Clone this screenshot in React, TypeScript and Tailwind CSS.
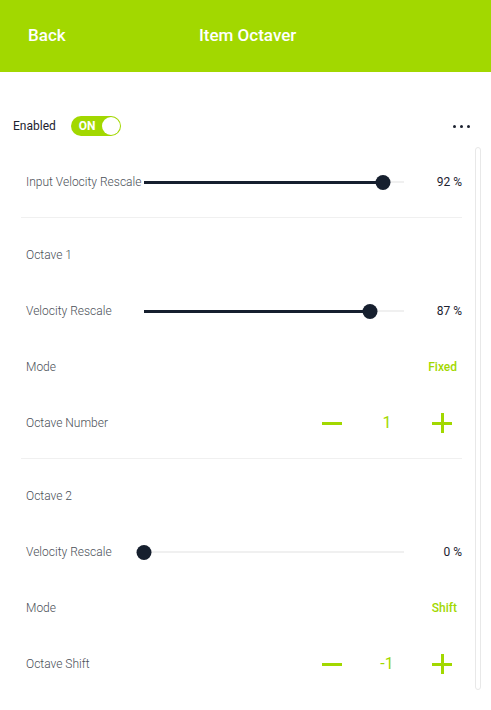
const GREEN = "#a2d800";

function Slider({ value }: { value: number }) {
  return (
    <div className="relative flex-1 h-[15px] flex items-center">
      <div className="absolute left-0 right-0 h-[2px] bg-[#f0f0f0]" />
      <div className="absolute left-0 h-[3px] bg-[#161f2e]" style={{ width: `${value}%` }} />
      <div
        className="absolute w-[15px] h-[15px] rounded-full bg-[#161f2e] -translate-x-1/2"
        style={{ left: `${value}%` }}
      />
    </div>
  );
}

function SliderRow({ label, value }: { label: string; value: number }) {
  return (
    <div className="h-14 flex items-center pl-[5px]">
      <span className="w-[118px] shrink-0 whitespace-nowrap text-[12px] font-light text-[#4a4f57]">{label}</span>
      <Slider value={value} />
      <span className="w-[58px] text-right text-[12px] text-[#1c2230]">{value} %</span>
    </div>
  );
}

function LabelRow({ label, right }: { label: string; right?: string }) {
  return (
    <div className="h-14 flex items-center justify-between pl-[5px] pr-[5px]">
      <span className="text-[12px] font-light text-[#4a4f57]">{label}</span>
      {right && (
        <span className="text-[12px] font-medium" style={{ color: GREEN }}>
          {right}
        </span>
      )}
    </div>
  );
}

function StepperRow({ label, value }: { label: string; value: number }) {
  return (
    <div className="h-14 flex items-center pl-[5px] pr-[10px]">
      <span className="flex-1 text-[12px] font-light text-[#4a4f57]">{label}</span>
      <div className="w-[20px] h-[3px] bg-[#a2d800]" />
      <span className="w-[90px] text-center text-[16px] text-[#a2d800]">{value}</span>
      <div className="relative w-[20px] h-[20px] flex items-center justify-center">
        <div className="absolute w-[20px] h-[3px] bg-[#a2d800]" />
        <div className="absolute w-[3px] h-[20px] bg-[#a2d800]" />
      </div>
    </div>
  );
}

function Divider() {
  return <div className="h-px bg-[#f0f0f0] mt-[7px] mb-[9px]" />;
}

export default function App() {
  return (
    <div className="w-[491px] h-[710px] bg-white overflow-hidden" style={{ fontFamily: "Roboto, 'Noto Sans', sans-serif" }}>
      <header className="h-[72px] bg-[#a2d800] flex items-center relative">
        <span className="pl-[28px] text-white text-[17px] font-medium">Back</span>
        <span className="absolute left-[199px] text-white text-[17px] font-medium">Item Octaver</span>
      </header>

      <div className="h-9 mt-9 flex items-center pl-[13px] pr-[21px]">
        <span className="text-[12px] text-[#1c2230]">Enabled</span>
        <div className="ml-[15px] w-[50px] h-[20px] rounded-full bg-[#a2d800] flex items-center justify-between pl-[8px] pr-[1px]">
          <span className="text-white text-[12px] font-bold">ON</span>
          <div className="w-[18px] h-[18px] rounded-full bg-white" />
        </div>
        <div className="ml-auto flex gap-[4px]">
          <div className="w-[3px] h-[3px] rounded-full bg-[#1c2230]" />
          <div className="w-[3px] h-[3px] rounded-full bg-[#1c2230]" />
          <div className="w-[3px] h-[3px] rounded-full bg-[#1c2230]" />
        </div>
      </div>

      <div className="flex mt-[3px]">
        <div className="w-[441px] ml-[21px] pt-[7px]">
          <SliderRow label="Input Velocity Rescale" value={92} />
          <Divider />
          <LabelRow label="Octave 1" />
          <SliderRow label="Velocity Rescale" value={87} />
          <LabelRow label="Mode" right="Fixed" />
          <StepperRow label="Octave Number" value={1} />
          <Divider />
          <LabelRow label="Octave 2" />
          <SliderRow label="Velocity Rescale" value={0} />
          <LabelRow label="Mode" right="Shift" />
          <StepperRow label="Octave Shift" value={-1} />
        </div>
        <div className="ml-[13px] w-[6px] h-[543px] rounded-full border border-[#e8e8e8]" />
      </div>
    </div>
  );
}
